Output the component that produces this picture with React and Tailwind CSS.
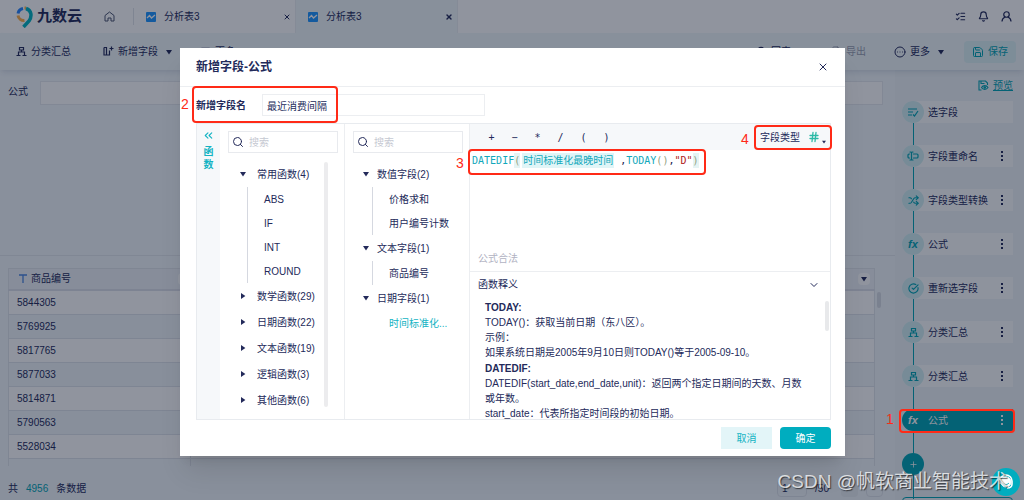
import {
  Bell,
  ChevronDown,
  ChevronsLeft,
  CircleCheckBig,
  CircleEllipsis,
  FileOutput,
  Hash,
  ListChecks,
  Menu,
  Plus,
  Save,
  Search,
  Shuffle,
  TextCursorInput,
  X,
} from "lucide-react";

const functionGroups = [
  { name: "常用函数(4)", items: ["ABS", "IF", "INT", "ROUND"] },
  { name: "数学函数(29)" },
  { name: "日期函数(22)" },
  { name: "文本函数(19)" },
  { name: "逻辑函数(3)" },
  { name: "其他函数(6)" },
];

const fieldGroups = [
  { name: "数值字段(2)", items: ["价格求和", "用户编号计数"] },
  { name: "文本字段(1)", items: ["商品编号"] },
  { name: "日期字段(1)", items: ["时间标准化..."], active: true },
];

const rows = [
  "5844305",
  "5769925",
  "5817765",
  "5877033",
  "5814871",
  "5790563",
  "5528034",
];

const CheckLines = () => (
  <svg width="12" height="12" viewBox="0 0 24 24" fill="none" stroke="currentColor" strokeWidth="2.4">
    <path d="M2 6h18M2 12h10M2 18h8M12 17l3 3 7-10" />
  </svg>
);

const GroupIcon = () => (
  <svg width="11" height="11" viewBox="0 0 22 22" fill="none" stroke="currentColor" strokeWidth="2.4">
    <path d="M7 3h8v5H7zM11 8v4M5 18v-6h12v6M1 19h8M13 19h8" />
  </svg>
);

const HomeIcon = () => (
  <svg width="11" height="11" viewBox="0 0 22 22" fill="none" stroke="currentColor" strokeWidth="2">
    <path d="M8 20H2V9l9-7 9 7v11h-6v-6H8z" />
  </svg>
);

const UserIcon = () => (
  <svg width="11" height="11" viewBox="0 0 22 22" fill="none" stroke="currentColor" strokeWidth="2.4">
    <circle cx="11" cy="7" r="5.5" />
    <path d="M2 21c0-5 2-7 6-9M20 21c0-5-2-7-6-9" />
  </svg>
);

const PreviewIcon = () => (
  <svg width="11" height="11" viewBox="0 0 22 22" fill="none" stroke="currentColor" strokeWidth="2.2">
    <path d="M7 20H2V2h13l4 4v4M6 2v5h7" />
    <path d="M7 15c3-5 10-5 13 0-3 5-10 5-13 0z" />
    <circle cx="13.5" cy="15" r="1.5" fill="currentColor" />
  </svg>
);

const DotsIcon = () => (
  <svg width="2" height="10" viewBox="0 0 2 10" fill="currentColor">
    <path d="M0 0h2v2H0zM0 4h2v2H0zM0 8h2v2H0z" />
  </svg>
);

const Fx = () => <i className="text-[11px] font-bold leading-none">fx</i>;

const steps = [
  { name: "选字段", icon: <CheckLines />, fixed: true },
  { name: "字段重命名", icon: <TextCursorInput size={12} strokeWidth={2.4} /> },
  { name: "字段类型转换", icon: <Shuffle size={11} strokeWidth={2.5} /> },
  { name: "公式", icon: <Fx /> },
  { name: "重新选字段", icon: <CircleCheckBig size={11} strokeWidth={2.5} /> },
  { name: "分类汇总", icon: <GroupIcon /> },
  { name: "分类汇总", icon: <GroupIcon /> },
  { name: "公式", icon: <Fx />, active: true },
];

// Small filled triangle, pointing down or right
const Caret = ({ right = false, size = 6 }) => (
  <svg
    width={size}
    height={size}
    viewBox="0 0 6 6"
    fill="currentColor"
    className={`shrink-0 ${right ? "-rotate-90" : ""}`}
  >
    <path d="M0 1h6L3 5.4z" />
  </svg>
);

const Logo = () => (
  <div className="flex items-center gap-1">
    <svg width="17" height="22" viewBox="0 0 34 44" fill="none" strokeWidth="6">
      <path d="M4 15A13 13 0 0 1 14 5" stroke="#2684ff" />
      <path d="M17 4h3" stroke="#ffb648" />
      <path d="M4 19A12 12 0 0 0 17 29" stroke="#ffb14a" />
      <path d="M20 5c12 4 12 16 6 25L15 42" stroke="#00b4c2" strokeWidth="7" />
    </svg>
    <span className="text-[15px] font-bold">九数云</span>
  </div>
);

const Tab = ({ active = false }) => (
  <div
    className={`flex w-[162px] items-center border-r border-[#eceff3] pl-3 pr-1 ${
      active ? "bg-[#f1f7fa]" : ""
    }`}
  >
    <svg width="10" height="10" viewBox="0 0 10 10">
      <rect width="10" height="10" rx="1" fill="#1e96ff" />
      <path d="M1 6l2.5-2.5 2 2.5L9 3" stroke="#fff" strokeWidth="1.3" fill="none" />
    </svg>
    <span className="ml-2 flex-1">分析表3</span>
    <button aria-label="关闭标签">
      <X size={8} strokeWidth={active ? 4 : 3} />
    </button>
  </div>
);

const TopBar = () => (
  <header className="flex h-[33px] items-stretch bg-white pl-4 pr-3">
    <Logo />
    <button aria-label="首页" className="ml-[22px] mr-[18px] text-[#4c5470]">
      <HomeIcon />
    </button>
    <span className="my-2 w-px bg-[#e1e4ea]" />
    <Tab />
    <Tab active />
    <div className="ml-auto flex items-center gap-3">
      <button aria-label="任务"><ListChecks size={11} strokeWidth={2.5} /></button>
      <button aria-label="通知"><Bell size={11} strokeWidth={2.5} /></button>
      <button aria-label="用户"><UserIcon /></button>
    </div>
  </header>
);

const Toolbar = () => (
  <div className="relative flex h-[37px] items-center bg-[#f1f7fa] pl-4 pr-2 shadow-md shadow-slate-400/20">
    <button className="flex items-center gap-1">
      <GroupIcon /> 分类汇总
    </button>
    <button className="ml-8 flex items-center gap-1">
      <svg width="11" height="11" viewBox="0 0 22 22" fill="none" stroke="currentColor" strokeWidth="2.4">
        <path d="M2 3v15h11V9M2 3h5v15M13 5h8M17 1v8" />
      </svg>
      新增字段
      <span className="ml-1 flex"><Caret /></span>
    </button>
    <button className="ml-7 flex items-center gap-1">
      <Menu size={11} /> 更多
    </button>
    <div className="ml-auto flex items-center">
      <button className="flex items-center gap-1">
        <Search size={11} strokeWidth={2.5} /> 回表
      </button>
      <button disabled className="ml-10 flex items-center gap-1 text-[#9aa1b1]">
        <FileOutput size={11} /> 导出
      </button>
      <button className="ml-7 flex items-center gap-1">
        <CircleEllipsis size={12} /> 更多
        <span className="ml-1 flex"><Caret /></span>
      </button>
      <button className="ml-5 flex h-[22px] items-center gap-1 rounded-sm bg-[#dcf3f5] px-2 text-[#00a4b4]">
        <Save size={12} /> 保存
      </button>
    </div>
  </div>
);

const DataTable = () => (
  <table className="w-full border-collapse border-x border-t border-[#e0e5ec]">
    <thead>
      <tr className="h-[22px] bg-[#eef3f7]">
        <th className="w-[182px] border-r border-b-2 border-[#dce1e9] pl-[10px] font-normal">
          <div className="flex items-center gap-1">
            <svg width="8" height="9" viewBox="0 0 8 9" stroke="#4b86e0" strokeWidth="1.3">
              <path d="M0 1h8M4 1v8" />
            </svg>
            商品编号
            <span className="ml-auto rounded-sm bg-white p-[3px]"><Caret /></span>
          </div>
        </th>
        <th className="border-b-2 border-[#dce1e9] pr-1 font-normal">
          <div className="flex justify-end">
            <span className="rounded-sm bg-white p-[3px]"><Caret /></span>
          </div>
        </th>
      </tr>
    </thead>
    <tbody>
      {rows.map((id) => (
        <tr key={id} className="h-[24px] border-b border-[#dfe4eb] odd:bg-white even:bg-[#f1f6fa]">
          <td className="border-r border-[#dfe4eb] pl-2">{id}</td>
          <td />
        </tr>
      ))}
      <tr className="h-2">
        <td className="border-r border-[#dfe4eb]" />
        <td />
      </tr>
    </tbody>
  </table>
);

const Workspace = () => (
  <main className="flex flex-1 flex-col">
    <div className="flex h-[186px] items-start gap-3 border-b border-[#e2e7ed] py-[11px] pl-2 pr-3">
      <label htmlFor="formula" className="leading-[22px]">公式</label>
      <input id="formula" className="h-6 min-w-0 flex-1 border border-[#e6eaef] bg-white" />
    </div>
    <div className="relative pl-2 pr-5 pt-3">
      <DataTable />
      {/* Scroll thumb beside the table */}
      <span className="absolute right-[14px] top-9 h-4 w-1 rounded-full bg-[#d8dde4]" />
    </div>
    <div className="mt-[10px] flex h-6 items-center pl-2 pr-3">
      共 <span className="mx-2 text-[#00a4b4]">4956</span> 条数据
      <div className="ml-auto flex items-center gap-2">
        <input
          aria-label="页码"
          defaultValue="1"
          className="h-[18px] w-[30px] rounded-sm border border-[#dfe4eb] px-1"
        />
        <span className="mr-1">/50</span>
        <button aria-label="上一页" className="h-[17px] w-[17px] rounded-sm bg-[#e9eef3]" />
        <button aria-label="下一页" className="h-[17px] w-[17px] rounded-sm border border-[#dfe4eb]" />
      </div>
    </div>
  </main>
);

const StepPanel = () => (
  <aside className="w-[129px] shrink-0 bg-[#eff5f8] pl-[7px] pr-[11px]">
    <a
      href="#preview"
      className="flex h-[31px] items-center justify-end gap-1 text-[#00a4b4] underline"
    >
      <PreviewIcon /> 预览
    </a>
    <ol className="relative flex flex-col gap-[22px]">
      <li aria-hidden="true" className="absolute left-[11px] top-3 h-[386px] w-px bg-[#00a4b4]" />
      {steps.map((step, i) => (
        <li
          key={i}
          className={`relative flex h-[22px] items-center rounded-l-full rounded-r-sm ${
            step.active ? "bg-[#00a5b5] text-white" : "bg-[#fcfdfe]"
          }`}
        >
          <span
            className={`flex h-[22px] w-[22px] items-center justify-center rounded-full ${
              step.active ? "text-white" : "bg-[#d2eff2] text-[#00a4b4]"
            }`}
          >
            {step.icon}
          </span>
          <span className="ml-1 whitespace-nowrap">{step.name}</span>
          {!step.fixed && (
            <button aria-label="步骤菜单" className="ml-auto mr-[10px]">
              <DotsIcon />
            </button>
          )}
        </li>
      ))}
      <li className="relative">
        <button
          aria-label="添加步骤"
          className="flex h-[22px] w-[22px] items-center justify-center rounded-full bg-[#00a5b5] text-white"
        >
          <Plus size={9} />
        </button>
      </li>
      <li className="h-6 rounded-sm border border-[#00a4b4]" />
    </ol>
  </aside>
);

// Numbered red frame that sits over the block it belongs to
const Mark = ({ n, className, numClass }) => (
  <div
    className={`pointer-events-none absolute rounded border-2 border-[#ff2a17] ${className}`}
  >
    <span className={`absolute text-[14px] leading-4 text-[#ff2a17] ${numClass}`}>{n}</span>
  </div>
);

const SearchBox = ({ label }) => (
  <div className="ml-2 mr-[6px] mt-[7px] flex h-[22px] items-center gap-[5px] border border-[#e8eaee] px-[3px]">
    <Search size={12} strokeWidth={2} />
    <input
      aria-label={label}
      placeholder="搜索"
      className="min-w-0 flex-1 placeholder:text-[#c6c9d2]"
    />
  </div>
);

const Tree = ({ groups, groupClass, lineClass, itemClass }) => (
  <ul className="mt-2">
    {groups.map((group) => (
      <li key={group.name}>
        <button className={`flex h-[26px] items-center ${groupClass}`}>
          <Caret right={!group.items} />
          {group.name}
        </button>
        {group.items && (
          <ul
            className={`border-l ${lineClass} ${
              group.active ? "border-transparent text-[#12b3c3]" : "border-[#d5d8e0]"
            }`}
          >
            {group.items.map((item) => (
              <li key={item} className={`flex h-6 items-center whitespace-nowrap ${itemClass}`}>
                {item}
              </li>
            ))}
          </ul>
        )}
      </li>
    ))}
  </ul>
);

const Editor = () => (
  <div className="flex min-w-0 flex-1 flex-col">
    <div className="flex h-[26px] items-center bg-[#f6f8fa] pl-[10px] pr-1 font-['DejaVu_Sans_Mono',monospace]">
      {["+", "−", "*", "/", "(", ")"].map((op) => (
        <button key={op} className="w-[23px] text-center">
          {op}
        </button>
      ))}
      <button className="relative ml-auto flex items-center font-['Liberation_Sans','Noto_Sans_CJK_SC',sans-serif]">
        字段类型
        <span className="ml-2 mr-[2px] text-[#2ab9a6]">
          <Hash size={12} strokeWidth={2.6} />
        </span>
        <span className="mt-[10px] flex"><Caret size={4} /></span>
        <Mark n="4" className="-inset-x-[6px] -bottom-[5px] -top-[5px]" numClass="-left-[15px] top-1" />
      </button>
    </div>
    <div className="relative h-[121px] font-['DejaVu_Sans_Mono','Noto_Sans_CJK_SC',monospace] text-[#12a8bb]">
      <code className="relative inline-flex h-[20px] items-center whitespace-nowrap pl-[2px] font-[inherit]">
        DATEDIF
        <span className="bg-[#e5f4f4] text-[#93a283]">(</span>
        <span className="mx-[2px] bg-[#e0f5f7] px-px">时间标准化最晚时间</span>
        <span className="ml-1 text-[#1a2050]">,</span>
        TODAY
        <span className="text-[#93a283]">()</span>
        <span className="text-[#1a2050]">,</span>
        <span className="text-[#b02020]">"D"</span>
        <span className="bg-[#e5f4f4] text-[#93a283]">)</span>
        <Mark n="3" className="-bottom-[5px] -left-[2px] -right-[7px] -top-px" numClass="-left-[14px] top-1 font-['Liberation_Sans',sans-serif]" />
      </code>
      <p className="absolute bottom-[6px] left-2 font-['Noto_Sans_CJK_SC',sans-serif] text-[#b1b2c2]">
        公式合法
      </p>
    </div>
    <button className="flex h-[26px] items-center justify-between border-t border-[#eceef1] pl-2 pr-[10px]">
      函数释义
      <ChevronDown size={12} />
    </button>
    <div className="flex min-h-0 flex-1 items-start justify-between overflow-hidden pl-[15px] pr-px pt-1">
      <div className="w-[324px] leading-[15px]">
        <h3 className="font-bold leading-[14px]">TODAY:</h3>
        <p>TODAY()：获取当前日期（东八区）。</p>
        <p>示例：</p>
        <p>如果系统日期是2005年9月10日则TODAY()等于2005-09-10。</p>
        <h3 className="mt-[2px] font-bold leading-[14px]">DATEDIF:</h3>
        <p>DATEDIF(start_date,end_date,unit)：返回两个指定日期间的天数、月数或年数。</p>
        <p>start_date：代表所指定时间段的初始日期。</p>
      </div>
      <span className="h-[30px] w-1 rounded-full bg-[#e8e9eb]" />
    </div>
  </div>
);

const FormulaDialog = () => (
  <section
    role="dialog"
    aria-label="新增字段-公式"
    className="w-[65%] bg-white shadow-xl"
  >
    <div className="flex h-[39px] items-center justify-between border-b border-[#eceef1] px-4">
      <h2 className="text-[12px] font-bold">新增字段-公式</h2>
      <button aria-label="关闭">
        <X size={12} />
      </button>
    </div>
    <div className="pl-4 pr-[14px]">
      <div className="relative flex h-9 items-center">
        <label htmlFor="field-name" className="w-[66px] font-bold">新增字段名</label>
        <input
          id="field-name"
          defaultValue="最近消费间隔"
          className="h-[22px] w-[223px] border border-[#eceef1] px-1"
        />
        <Mark n="2" className="-left-1 -top-px bottom-0 w-[146px]" numClass="-left-[13px] top-2" />
      </div>
      <div className="flex h-[297px] border border-[#e8ebef]">
        <div className="flex w-[23px] flex-col items-center bg-[#f6f8fa] pt-[5px] text-[#12b3c3]">
          <button aria-label="收起"><ChevronsLeft size={13} /></button>
          <span className="mt-[3px] w-[10px] font-bold leading-[13px]">函数</span>
        </div>
        <div className="relative w-[125px] border-r border-[#eceef1]">
          <SearchBox label="搜索函数" />
          <Tree
            groups={functionGroups}
            groupClass="ml-5 gap-[11px]"
            lineClass="ml-[27px]"
            itemClass="pl-4"
          />
          <span className="absolute bottom-3 right-4 top-[38px] w-1 rounded-full bg-[#ececee]" />
        </div>
        <div className="w-[125px] border-r border-[#eceef1]">
          <SearchBox label="搜索字段" />
          <Tree
            groups={fieldGroups}
            groupClass="ml-[18px] gap-2"
            lineClass="ml-[27px]"
            itemClass="pl-4"
          />
        </div>
        <Editor />
      </div>
      <div className="flex h-9 items-center justify-end gap-2">
        <button className="h-[22px] w-[51px] bg-[#e3f5f8] text-[#12b3c3]">取消</button>
        <button className="h-[22px] w-[51px] rounded-sm bg-[#00adbf] text-white">确定</button>
      </div>
    </div>
  </section>
);

const App = () => (
  <div className="relative flex h-screen flex-col overflow-hidden bg-[#f3f8fb] font-['Liberation_Sans','Noto_Sans_CJK_SC',sans-serif] text-[10px] text-[#232a5a]">
    <TopBar />
    <Toolbar />
    <div className="flex min-h-0 flex-1">
      <Workspace />
      <StepPanel />
    </div>

    {/* Mask and dialog */}
    <div className="absolute inset-0 flex items-start justify-center bg-[#081127]/45 pl-px pt-12">
      <FormulaDialog />
    </div>

    <Mark n="1" className="right-[9px] top-[409px] h-6 w-[116px]" numClass="-left-[15px] top-0" />
    <button
      aria-label="在线客服"
      className="absolute bottom-1 right-1 flex h-7 w-7 items-center justify-center rounded-full bg-[#00adbf]"
    >
      <svg width="16" height="16" viewBox="0 0 16 16" fill="none" stroke="#fff">
        <circle cx="8" cy="8" r="5" fill="#fff" />
        <path d="M2 10V7a6 6 0 0 1 12 0v3c0 3-2 4-5 4" strokeWidth="1.6" />
        <path d="M5 9c2 2 4 2 6 0" stroke="#00adbf" />
      </svg>
    </button>
    <p className="pointer-events-none absolute bottom-[6px] right-4 text-[19px] leading-6 text-white/75 [text-shadow:1px_1px_1px_rgba(0,0,0,0.6)]">
      CSDN @帆软商业智能技术
    </p>
  </div>
);

export default App;
